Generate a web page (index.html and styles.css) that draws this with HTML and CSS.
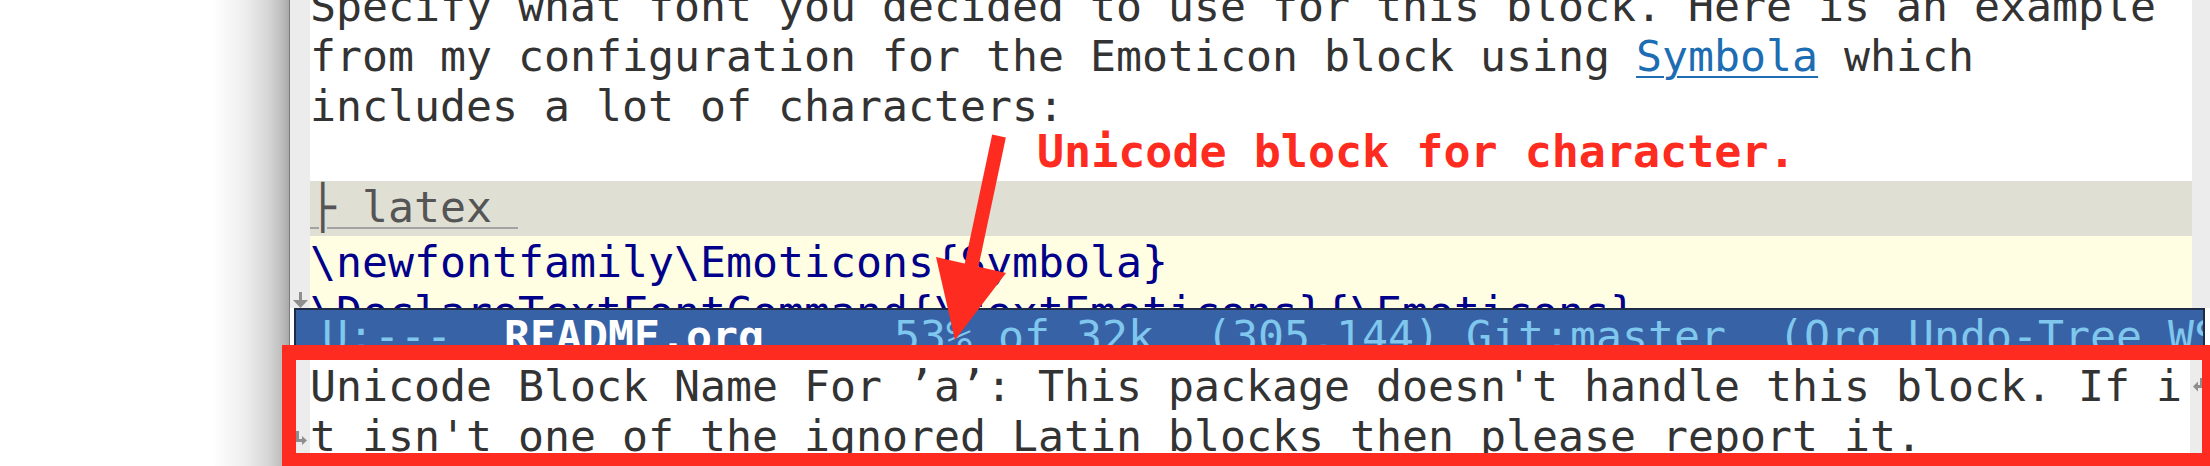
FILE: index.html
```html
<!DOCTYPE html>
<html>
<head>
<meta charset="utf-8">
<title>Emacs README.org</title>
<link rel="stylesheet" href="styles.css">
</head>
<body>
<div class="screen">
  <div class="desk"></div>
  <div class="frame">
    <div class="window">
      <div class="fringe fringe-left">
        <svg class="glyph" width="17" height="17" viewBox="0 0 17 17"><rect x="7" y="0" width="3" height="9" fill="#8e8e8e"/><path d="M1 8 H16 L8.5 16 Z" fill="#8e8e8e"/></svg>
      </div>
      <div class="buffer">
        <div class="line first">Specify what font you decided to use for this block. Here is an example</div>
        <div class="line">from my configuration for the Emoticon block using <span class="link">Symbola</span> which</div>
        <div class="line">includes a lot of characters:</div>
        <div class="line"> </div>
        <div class="line src-head"><span class="src-label">├ latex </span></div>
        <div class="line code">\newfontfamily\Emoticons{Symbola}</div>
        <div class="line code">\DeclareTextFontCommand{\textEmoticons}{\Emoticons}</div>
      </div>
      <div class="fringe fringe-right"></div>
    </div>
    <div class="modeline"> U:---  <span class="buf-name">README.org</span>     53% of 32k  (305,144) Git:master  (Org Undo-Tree WS)</div>
    <div class="minibuffer">
      <div class="fringe mb-left">
        <svg class="glyph" width="11" height="14" viewBox="0 0 11 14"><path d="M0 0 H3 V8 H6 V5 L11 9.5 L6 14 V11 H0 Z" fill="#8e8e8e"/></svg>
      </div>
      <div class="echo">
        <div class="line">Unicode Block Name For ’a’: This package doesn't handle this block. If i</div>
        <div class="line">t isn't one of the ignored Latin blocks then please report it.</div>
      </div>
      <div class="fringe mb-right">
        <svg class="glyph" width="10" height="15" viewBox="0 0 10 15"><path d="M10 0 V10 H5 V13.5 L0 8.5 L5 3.5 V7 H7 V0 Z" fill="#8e8e8e"/></svg>
      </div>
    </div>
  </div>
</div>
<div class="note">Unicode block for character.</div>
<svg class="arrow" width="2210" height="466" viewBox="0 0 2210 466">
  <line x1="999" y1="136" x2="971" y2="268" stroke="#fd2b20" stroke-width="14"/>
  <polygon points="1006,273 936,257 955,340" fill="#fd2b20"/>
</svg>
<div class="callout"></div>
</body>
</html>
```

FILE: styles.css
```css
* {
  box-sizing: border-box;
}

html,
body {
  margin: 0;
  padding: 0;
}

body {
  width: 2210px;
  height: 466px;
  overflow: hidden;
  background: #ffffff;
  position: relative;
  font-family: "DejaVu Sans Mono", "Liberation Mono", monospace;
  font-size: 43.2px;
  color: #333333;
}

.screen {
  display: flex;
  height: 466px;
}

.desk {
  width: 289px;
  flex: none;
  background: linear-gradient(to right, #ffffff 0, #ffffff 212px, #eeeeee 245px, #d6d6d6 268px, #bdbdbd 282px, #a9a9a9 289px);
}

.frame {
  flex: 1;
  min-width: 0;
  display: flex;
  flex-direction: column;
  border-left: 1px solid #7b7b7b;
  background: #ffffff;
}

.window {
  height: 308px;
  flex: none;
  display: flex;
  overflow: hidden;
}

.fringe {
  flex: none;
  background: #ececec;
}

.glyph {
  display: block;
}

.fringe-left {
  width: 20px;
  padding: 292px 0 0 2px;
}

.fringe-right {
  width: 18px;
}

.buffer {
  flex: 1;
  min-width: 0;
  background: #ffffff;
}

.line {
  height: 50px;
  line-height: 50px;
  white-space: pre;
}

.first {
  margin-top: -19px;
}

.src-head {
  height: 55px;
  line-height: 52px;
  background: #dfdfd4;
  color: #555555;
}

.src-label {
  text-decoration: underline;
  text-decoration-color: #a3a3a3;
  text-decoration-thickness: 2px;
  text-underline-offset: 5px;
}

.code {
  line-height: 52px;
  background: #fffde2;
  color: #00008a;
}

.link {
  color: #1d6db3;
  text-decoration: underline;
  text-decoration-thickness: 2px;
  text-underline-offset: 5px;
}

.modeline {
  height: 52px;
  flex: none;
  margin: 0 5px 0 4px;
  border: 2px solid #1e2b47;
  background: #3862a6;
  color: #7fc7ec;
  line-height: 52px;
  white-space: pre;
  overflow: hidden;
}

.buf-name {
  color: #ffffff;
  font-weight: bold;
}

.minibuffer {
  flex: 1;
  display: flex;
}

.mb-left {
  width: 20px;
  padding: 71px 0 0 6px;
}

.echo {
  flex: 1;
  min-width: 0;
  background: #ffffff;
}

.echo .line {
  line-height: 52px;
}

.mb-right {
  width: 20px;
  padding: 18px 0 0 3px;
}

.note {
  position: absolute;
  left: 1037px;
  top: 127px;
  font-weight: bold;
  font-size: 45px;
  line-height: 50px;
  color: #fd2b20;
  white-space: pre;
}

.arrow {
  position: absolute;
  left: 0;
  top: 0;
}

.callout {
  position: absolute;
  left: 282px;
  top: 345px;
  width: 1934px;
  height: 122px;
  border: 14px solid #fd2b20;
  border-top-width: 15px;
}
```
